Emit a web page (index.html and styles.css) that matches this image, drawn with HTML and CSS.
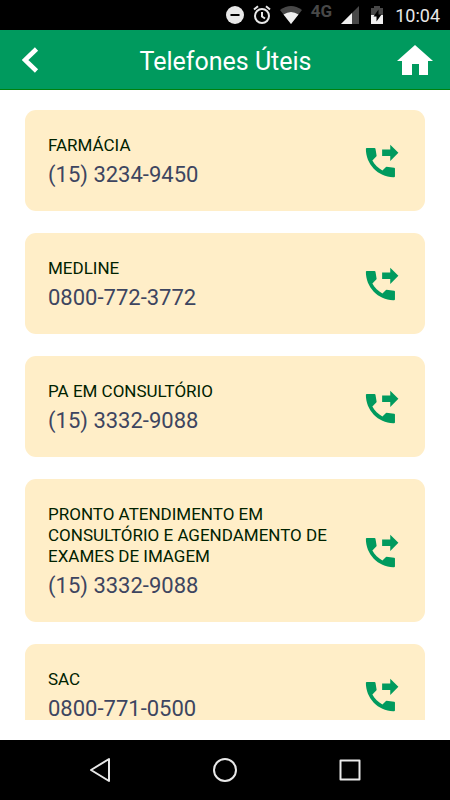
FILE: index.html
```html
<!DOCTYPE html>
<html lang="pt-BR">
<head>
<meta charset="utf-8">
<meta name="viewport" content="width=device-width, initial-scale=1">
<title>Telefones Úteis</title>
<link rel="stylesheet" href="styles.css">
</head>
<body>
<svg class="sprite" aria-hidden="true">
  <symbol id="call" viewBox="0 0 24 24">
    <path d="M18 11l5-5-5-5v3h-5v4h5z"/>
    <path d="M20.4 15.2l-4.7-.55q-.3 0-.5.2l-2 2c-2.500-1.300-4.900-3.600-6.200-6.100l2.400-2.400q.25-.25.2-.6L8.900 3.500Q8.800 3 8.300 3H3.600Q3 3 3 3.600C2.900 13.200 10.800 21.300 20.300 21q.6 0 .6-.6V15.800q0-.5-.5-.6z"/>
  </symbol>
</svg>

<div class="status">
  <svg width="18" height="18" viewBox="0 0 18 18"><circle cx="9" cy="9" r="9" fill="#e8e8e8"/><path d="M4.500 9h9" stroke="#000" stroke-width="2"/></svg>
  <svg width="18" height="20" viewBox="0 0 18 20" fill="none" stroke="#e8e8e8" stroke-width="2"><circle cx="9" cy="11" r="7"/><path d="M9 7v4.500l3 2M1 4.500l4-3.300M17 4.500l-4-3.300"/></svg>
  <svg width="22" height="18" viewBox="0 0 22 18"><path d="M0 4Q11-4 22 4L11 18z" fill="#484848"/><path d="M3.500 8.500Q11 3.500 18.500 8.500L11 18z" fill="#f0f0f0"/></svg>
  <span class="network">4G</span>
  <svg width="18" height="18" viewBox="0 0 18 18"><path d="M0 18L18 0v18z" fill="#484848"/><path d="M0 18L11 7v11z" fill="#f0f0f0"/></svg>
  <svg class="battery" width="12" height="18" viewBox="0 0 12 18"><path d="M0 2h3V0h6v2h3v7H0z" fill="#484848"/><path d="M0 9h12v9H0z" fill="#f0f0f0"/><path d="M7.500 3.500L2.500 10.500h3v5l5-7h-3z" fill="#000"/></svg>
  <time class="clock">10:04</time>
</div>

<header class="bar">
  <button class="icon-button" aria-label="Voltar"><svg width="17" height="26" viewBox="0 0 17 26"><path d="M14.500 2L3 13l11.500 11" fill="none" stroke="#fff" stroke-width="4.600"/></svg></button>
  <h1>Telefones Úteis</h1>
  <button class="icon-button" aria-label="Início"><svg width="36" height="30" viewBox="0 0 36 30"><path d="M18 0l18 16h-5v14h-9V19h-7v11H5V16H0z" fill="#fff"/></svg></button>
</header>

<main class="list">
  <article class="card">
    <div class="info"><h2>FARMÁCIA</h2><p>(15) 3234-9450</p></div>
    <button class="icon-button call" aria-label="Ligar para Farmácia"><svg><use href="#call"/></svg></button>
  </article>
  <article class="card">
    <div class="info"><h2>MEDLINE</h2><p>0800-772-3772</p></div>
    <button class="icon-button call" aria-label="Ligar para Medline"><svg><use href="#call"/></svg></button>
  </article>
  <article class="card">
    <div class="info"><h2>PA EM CONSULTÓRIO</h2><p>(15) 3332-9088</p></div>
    <button class="icon-button call" aria-label="Ligar para PA em Consultório"><svg><use href="#call"/></svg></button>
  </article>
  <article class="card">
    <div class="info"><h2>PRONTO ATENDIMENTO EM CONSULTÓRIO E AGENDAMENTO DE EXAMES DE IMAGEM</h2><p>(15) 3332-9088</p></div>
    <button class="icon-button call" aria-label="Ligar para Pronto Atendimento"><svg><use href="#call"/></svg></button>
  </article>
  <article class="card">
    <div class="info"><h2>SAC</h2><p>0800-771-0500</p></div>
    <button class="icon-button call" aria-label="Ligar para SAC"><svg><use href="#call"/></svg></button>
  </article>
</main>

<nav class="system">
  <button class="icon-button" aria-label="Voltar no sistema"><svg width="24" height="26" viewBox="0 0 24 26"><path d="M21 2v22L3 13z"/></svg></button>
  <button class="icon-button" aria-label="Tela inicial"><svg width="26" height="26" viewBox="0 0 26 26"><circle cx="13" cy="13" r="11"/></svg></button>
  <button class="icon-button" aria-label="Aplicativos recentes"><svg width="24" height="24" viewBox="0 0 24 24"><rect x="2.500" y="2.500" width="19" height="19"/></svg></button>
</nav>
</body>
</html>
```
FILE: styles.css
```css
* {
  box-sizing: border-box;
}

body {
  margin: 0;
  height: 100vh;
  display: flex;
  flex-direction: column;
  background: #fff;
  font-family: Roboto, sans-serif;
}

h1, h2, p {
  margin: 0;
  font-weight: 400;
}

svg {
  display: block;
}

.sprite {
  position: absolute;
  width: 0;
  height: 0;
}

.icon-button {
  display: flex;
  padding: 0;
  border: 0;
  background: none;
}

.status {
  flex: none;
  display: flex;
  align-items: center;
  justify-content: flex-end;
  gap: 9px;
  height: 30px;
  padding-right: 10px;
  background: #000;
}

.network {
  align-self: flex-start;
  color: #484848;
  font-size: 17px;
  font-weight: 700;
  line-height: 22px;
}

.battery {
  margin: 0 3px;
}

.clock {
  color: #e8e8e8;
  font-size: 18px;
}

.bar {
  flex: none;
  display: flex;
  align-items: center;
  justify-content: space-between;
  height: 60px;
  padding: 0 17px 0 22px;
  border-bottom: 1px solid #00820f;
  background: #009a5e;
}

.bar h1 {
  flex: 1;
  padding: 4px 0 0 15px;
  color: #fff;
  font-size: 25px;
  text-align: center;
}

.list {
  flex: 1;
  min-height: 0;
  display: flex;
  flex-direction: column;
  gap: 22px;
  margin: 20px 25px;
  overflow: hidden;
}

.card {
  flex: none;
  display: flex;
  align-items: center;
  gap: 16px;
  padding: 25px 25px 21px 23px;
  border-radius: 11px;
  background: #ffeec8;
}

.info {
  flex: 1;
}

.info h2 {
  color: #002200;
  font-size: 17px;
  line-height: 21px;
}

.info p {
  padding-top: 4px;
  color: #3d4560;
  font-size: 22px;
  line-height: 30px;
}

.call svg {
  width: 39px;
  height: 39px;
  fill: #009a5e;
}

.system {
  flex: none;
  display: flex;
  align-items: center;
  justify-content: space-between;
  height: 60px;
  padding: 0 88px;
  background: #000;
}

.system svg {
  fill: none;
  stroke: #e8e8e8;
  stroke-width: 2;
  stroke-linejoin: round;
}
```
